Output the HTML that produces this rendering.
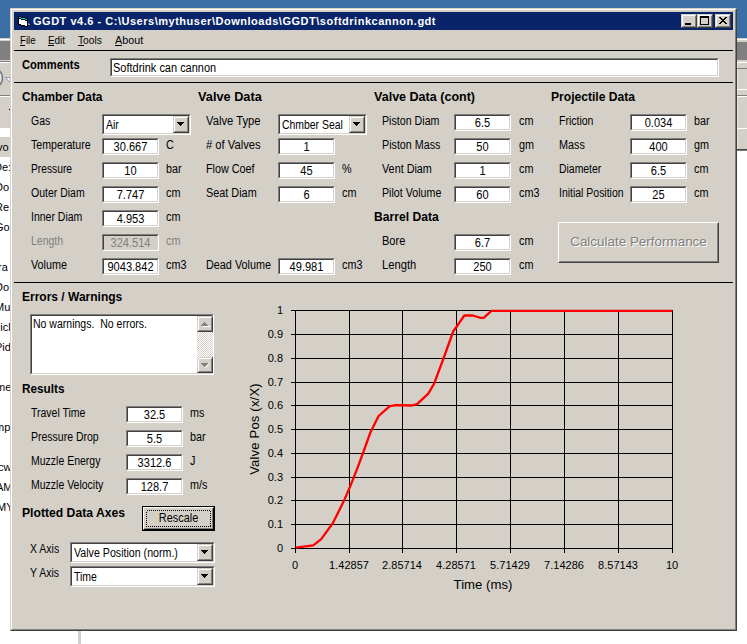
<!DOCTYPE html>
<html><head><meta charset="utf-8"><style>
html,body{margin:0;padding:0;}
body{width:747px;height:644px;position:relative;overflow:hidden;background:#fff;font-family:'Liberation Sans', sans-serif;font-size:11px;line-height:13px;color:#000;}
body div, body svg{position:absolute;box-sizing:content-box;}
body div{white-space:pre;}
</style></head><body>
<div style="left:0px;top:0px;width:747px;height:38px;background:#3a6ea5;"></div>
<div style="left:0px;top:38px;width:10px;height:1px;background:#d4d0c8;"></div>
<div style="left:0px;top:39px;width:10px;height:1px;background:#fff;"></div>
<div style="left:0px;top:40px;width:10px;height:1px;background:#d4d0c8;"></div>
<div style="left:0px;top:41px;width:10px;height:19px;background:#808080;"></div>
<div style="left:0px;top:60px;width:10px;height:1px;background:#d4d0c8;"></div>
<div style="left:0px;top:61px;width:10px;height:1px;background:#808080;"></div>
<div style="left:0px;top:62px;width:10px;height:1px;background:#fff;"></div>
<div style="left:0px;top:63px;width:10px;height:65px;background:#d4d0c8;"></div>
<div style="left:0px;top:95px;width:10px;height:1px;background:#808080;"></div>
<div style="left:0px;top:96px;width:10px;height:1px;background:#fff;"></div>
<div style="left:0px;top:128px;width:10px;height:9px;background:#fff;"></div>
<div style="left:0px;top:137px;width:10px;height:20px;background:#d4d0c8;"></div>
<div style="left:0px;top:157px;width:10px;height:473px;background:#fff;"></div>
<div style="left:78px;top:631px;width:3px;height:13px;background:#d4d0c8;"></div>
<svg style="left:0;top:66px" width="10" height="26"><ellipse cx="-5" cy="12" rx="7.5" ry="9" fill="#e4e4e4" stroke="#687078" stroke-width="1.4"/><ellipse cx="-5" cy="12" rx="9" ry="10.5" fill="none" stroke="#c8c8c8" stroke-width="1"/><path d="M5.5 11.5 L10 11.5 L10 16.5 Z" fill="#fff" stroke="#7080a0" stroke-width="0.7"/></svg>
<div style="left:9px;top:109px;width:1px;height:1px;background:#000;"></div>
<div style="left:-3px;top:141px;font-size:11px;line-height:13px;color:#000;white-space:nowrap;">vo</div>
<div style="left:-6px;top:161px;font-size:11px;line-height:13px;color:#000;white-space:nowrap;">De:</div>
<div style="left:-5px;top:181px;font-size:11px;line-height:13px;color:#000;white-space:nowrap;">Do</div>
<div style="left:-5px;top:201px;font-size:11px;line-height:13px;color:#000;white-space:nowrap;">Re</div>
<div style="left:-5px;top:221px;font-size:11px;line-height:13px;color:#000;white-space:nowrap;">Go</div>
<div style="left:-2px;top:261px;font-size:11px;line-height:13px;color:#000;white-space:nowrap;">ra</div>
<div style="left:-5px;top:281px;font-size:11px;line-height:13px;color:#000;white-space:nowrap;">Do</div>
<div style="left:-5px;top:301px;font-size:11px;line-height:13px;color:#000;white-space:nowrap;">Mu</div>
<div style="left:-7px;top:321px;font-size:11px;line-height:13px;color:#000;white-space:nowrap;">Picl</div>
<div style="left:-5px;top:341px;font-size:11px;line-height:13px;color:#000;white-space:nowrap;">Pid</div>
<div style="left:-4px;top:381px;font-size:11px;line-height:13px;color:#000;white-space:nowrap;">me</div>
<div style="left:-5px;top:421px;font-size:11px;line-height:13px;color:#000;white-space:nowrap;">mp</div>
<div style="left:-2px;top:461px;font-size:11px;line-height:13px;color:#000;white-space:nowrap;">cw</div>
<div style="left:-4px;top:481px;font-size:11px;line-height:13px;color:#000;white-space:nowrap;">AM</div>
<div style="left:-3px;top:501px;font-size:11px;line-height:13px;color:#000;white-space:nowrap;">MY</div>
<div style="left:737px;top:38px;width:10px;height:1px;background:#d4d0c8;"></div>
<div style="left:737px;top:39px;width:10px;height:1px;background:#fff;"></div>
<div style="left:737px;top:40px;width:10px;height:2px;background:#d4d0c8;"></div>
<div style="left:737px;top:42px;width:10px;height:18px;background:#808080;"></div>
<div style="left:737px;top:60px;width:10px;height:2px;background:#d4d0c8;"></div>
<div style="left:737px;top:62px;width:10px;height:1px;background:#fff;"></div>
<div style="left:737px;top:63px;width:10px;height:87px;background:#d4d0c8;"></div>
<div style="left:737px;top:63px;width:1px;height:86px;background:#e8e6e0;"></div>
<div style="left:737px;top:68px;width:10px;height:1px;background:#808080;"></div>
<div style="left:737px;top:89px;width:10px;height:1px;background:#fff;"></div>
<div style="left:737px;top:95px;width:10px;height:1px;background:#808080;"></div>
<div style="left:737px;top:96px;width:10px;height:1px;background:#fff;"></div>
<div style="left:737px;top:128px;width:10px;height:1px;background:#fff;"></div>
<div style="left:737px;top:149px;width:10px;height:1px;background:#404040;"></div>
<div style="left:737px;top:150px;width:10px;height:1px;background:#808080;"></div>
<div style="left:10px;top:8px;width:725px;height:621px;border:1px solid;border-color:#d4d0c8 #404040 #404040 #d4d0c8;background:#d4d0c8"><div style="position:absolute;left:0;top:0;width:723px;height:619px;border:1px solid;border-color:#fff #808080 #808080 #fff;"></div></div>
<div style="left:14px;top:12px;width:719px;height:18px;background:#0a246a;"></div>
<div style="left:33px;top:15px;font-size:11px;line-height:13px;color:#fff;font-weight:bold;letter-spacing:0.52px;">GGDT v4.6 - C:\Users\mythuser\Downloads\GGDT\softdrinkcannon.gdt</div>
<svg style="left:18px;top:16px" width="14" height="12" shape-rendering="crispEdges"><path d="M0 0h3v1h4v1h3v9h-3v-1h-4v-1h-3z" fill="#000"/><rect x="1" y="3" width="2" height="5" fill="#fff"/><rect x="3" y="4" width="4" height="5" fill="#fff"/><rect x="7" y="5" width="2" height="5" fill="#fff"/><rect x="1" y="1" width="2" height="1" fill="#00e0e0"/><rect x="3" y="2" width="4" height="1" fill="#00e0e0"/><rect x="7" y="3" width="2" height="1" fill="#00e0e0"/><path d="M10 7h1v1h1v1h-2z" fill="#a09880"/></svg>
<div style="left:681px;top:14px;width:14px;height:12px;border:1px solid;border-color:#d4d0c8 #404040 #404040 #d4d0c8;"><div style="position:absolute;left:0;top:0;width:12px;height:10px;border:1px solid;border-color:#fff #808080 #808080 #fff;background:#d4d0c8"></div></div>
<div style="left:697px;top:14px;width:14px;height:12px;border:1px solid;border-color:#d4d0c8 #404040 #404040 #d4d0c8;"><div style="position:absolute;left:0;top:0;width:12px;height:10px;border:1px solid;border-color:#fff #808080 #808080 #fff;background:#d4d0c8"></div></div>
<div style="left:715px;top:14px;width:14px;height:12px;border:1px solid;border-color:#d4d0c8 #404040 #404040 #d4d0c8;"><div style="position:absolute;left:0;top:0;width:12px;height:10px;border:1px solid;border-color:#fff #808080 #808080 #fff;background:#d4d0c8"></div></div>
<div style="left:685px;top:23px;width:6px;height:2px;background:#000;"></div>
<svg style="left:700px;top:16px" width="9" height="9" shape-rendering="crispEdges"><rect x="0" y="0" width="9" height="2"/><rect x="0" y="0" width="1" height="9"/><rect x="8" y="0" width="1" height="9"/><rect x="0" y="8" width="9" height="1"/></svg>
<svg style="left:719px;top:17px" width="8" height="7" shape-rendering="crispEdges"><path d="M0 0h2v1h1v1h2v-1h1v-1h2v1h-1v1h-1v1h-1v1h1v1h1v1h1v1h-2v-1h-1v-1h-2v1h-1v1h-2v-1h1v-1h1v-1h1v-1h-1v-1h-1v-1h-1z"/></svg>
<div style="left:20px;top:34px;font-size:11px;line-height:13px;color:#000;transform:scaleX(0.880);transform-origin:0 0;">File</div>
<div style="left:20px;top:45px;width:5px;height:1px;background:#000;"></div>
<div style="left:48px;top:34px;font-size:11px;line-height:13px;color:#000;transform:scaleX(0.900);transform-origin:0 0;">Edit</div>
<div style="left:48px;top:45px;width:6px;height:1px;background:#000;"></div>
<div style="left:78px;top:34px;font-size:11px;line-height:13px;color:#000;transform:scaleX(0.930);transform-origin:0 0;">Tools</div>
<div style="left:78px;top:45px;width:6px;height:1px;background:#000;"></div>
<div style="left:115px;top:34px;font-size:11px;line-height:13px;color:#000;transform:scaleX(0.980);transform-origin:0 0;">About</div>
<div style="left:115px;top:45px;width:7px;height:1px;background:#000;"></div>
<div style="left:14px;top:50px;width:719px;height:1px;background:#000;"></div>
<div style="left:14px;top:82px;width:719px;height:1px;background:#000;"></div>
<div style="left:14px;top:282px;width:719px;height:1px;background:#000;"></div>
<div style="left:22px;top:59px;font-size:12px;line-height:13px;color:#000;font-weight:bold;transform:scaleX(0.929);transform-origin:0 0;">Comments</div>
<div style="left:110px;top:58px;width:607px;height:17px;border:1px solid;border-color:#808080 #fff #fff #808080;"><div style="position:absolute;left:0;top:0;width:605px;height:15px;border:1px solid;border-color:#404040 #d4d0c8 #d4d0c8 #404040;background:#fff"></div></div>
<div style="left:113px;top:62px;font-size:12px;line-height:13px;color:#000;transform:scaleX(0.915);transform-origin:0 0;">Softdrink can cannon</div>
<div style="left:22px;top:91px;font-size:12px;line-height:13px;color:#000;font-weight:bold;transform:scaleX(0.989);transform-origin:0 0;">Chamber Data</div>
<div style="left:198px;top:91px;font-size:12px;line-height:13px;color:#000;font-weight:bold;transform:scaleX(1.062);transform-origin:0 0;">Valve Data</div>
<div style="left:374px;top:91px;font-size:12px;line-height:13px;color:#000;font-weight:bold;transform:scaleX(1.045);transform-origin:0 0;">Valve Data (cont)</div>
<div style="left:551px;top:91px;font-size:12px;line-height:13px;color:#000;font-weight:bold;transform:scaleX(1.008);transform-origin:0 0;">Projectile Data</div>
<div style="left:374px;top:211px;font-size:12px;line-height:13px;color:#000;font-weight:bold;transform:scaleX(1.011);transform-origin:0 0;">Barrel Data</div>
<div style="left:31px;top:115px;font-size:12px;line-height:13px;color:#000;transform:scaleX(0.871);transform-origin:0 0;">Gas</div>
<div style="left:102px;top:114px;width:87px;height:19px;border:1px solid;border-color:#808080 #fff #fff #808080;"><div style="position:absolute;left:0;top:0;width:85px;height:17px;border:1px solid;border-color:#404040 #d4d0c8 #d4d0c8 #404040;background:#fff"></div></div>
<div style="left:173px;top:116px;width:14px;height:15px;border:1px solid;border-color:#d4d0c8 #404040 #404040 #d4d0c8;"><div style="position:absolute;left:0;top:0;width:12px;height:13px;border:1px solid;border-color:#fff #808080 #808080 #fff;background:#d4d0c8"></div></div>
<svg style="left:177px;top:122px" width="7" height="4"><rect x="0" y="0" width="7" height="1"/><rect x="1" y="1" width="5" height="1"/><rect x="2" y="2" width="3" height="1"/><rect x="3" y="3" width="1" height="1"/></svg>
<div style="left:106px;top:119px;font-size:12px;line-height:13px;color:#000;transform:scaleX(0.875);transform-origin:0 0;">Air</div>
<div style="left:31px;top:139px;font-size:12px;line-height:13px;color:#000;transform:scaleX(0.886);transform-origin:0 0;">Temperature</div>
<div style="left:102px;top:138px;width:55px;height:15px;border:1px solid;border-color:#808080 #fff #fff #808080;"><div style="position:absolute;left:0;top:0;width:53px;height:13px;border:1px solid;border-color:#404040 #d4d0c8 #d4d0c8 #404040;background:#fff"></div></div>
<div style="left:102px;top:141px;font-size:12px;line-height:13px;color:#000;width:57px;text-align:center;transform:scaleX(0.920);transform-origin:50% 0;">30.667</div>
<div style="left:166px;top:139px;font-size:12px;line-height:13px;color:#000;transform:scaleX(0.900);transform-origin:0 0;">C</div>
<div style="left:31px;top:163px;font-size:12px;line-height:13px;color:#000;transform:scaleX(0.855);transform-origin:0 0;">Pressure</div>
<div style="left:102px;top:162px;width:55px;height:15px;border:1px solid;border-color:#808080 #fff #fff #808080;"><div style="position:absolute;left:0;top:0;width:53px;height:13px;border:1px solid;border-color:#404040 #d4d0c8 #d4d0c8 #404040;background:#fff"></div></div>
<div style="left:102px;top:165px;font-size:12px;line-height:13px;color:#000;width:57px;text-align:center;transform:scaleX(0.920);transform-origin:50% 0;">10</div>
<div style="left:166px;top:163px;font-size:12px;line-height:13px;color:#000;transform:scaleX(0.900);transform-origin:0 0;">bar</div>
<div style="left:31px;top:187px;font-size:12px;line-height:13px;color:#000;transform:scaleX(0.875);transform-origin:0 0;">Outer Diam</div>
<div style="left:102px;top:186px;width:55px;height:15px;border:1px solid;border-color:#808080 #fff #fff #808080;"><div style="position:absolute;left:0;top:0;width:53px;height:13px;border:1px solid;border-color:#404040 #d4d0c8 #d4d0c8 #404040;background:#fff"></div></div>
<div style="left:102px;top:189px;font-size:12px;line-height:13px;color:#000;width:57px;text-align:center;transform:scaleX(0.920);transform-origin:50% 0;">7.747</div>
<div style="left:166px;top:187px;font-size:12px;line-height:13px;color:#000;transform:scaleX(0.900);transform-origin:0 0;">cm</div>
<div style="left:31px;top:211px;font-size:12px;line-height:13px;color:#000;transform:scaleX(0.875);transform-origin:0 0;">Inner Diam</div>
<div style="left:102px;top:210px;width:55px;height:15px;border:1px solid;border-color:#808080 #fff #fff #808080;"><div style="position:absolute;left:0;top:0;width:53px;height:13px;border:1px solid;border-color:#404040 #d4d0c8 #d4d0c8 #404040;background:#fff"></div></div>
<div style="left:102px;top:213px;font-size:12px;line-height:13px;color:#000;width:57px;text-align:center;transform:scaleX(0.920);transform-origin:50% 0;">4.953</div>
<div style="left:166px;top:211px;font-size:12px;line-height:13px;color:#000;transform:scaleX(0.900);transform-origin:0 0;">cm</div>
<div style="left:31px;top:235px;font-size:12px;line-height:13px;color:#808080;transform:scaleX(0.875);transform-origin:0 0;">Length</div>
<div style="left:102px;top:234px;width:55px;height:15px;border:1px solid;border-color:#808080 #fff #fff #808080;"><div style="position:absolute;left:0;top:0;width:53px;height:13px;border:1px solid;border-color:#404040 #d4d0c8 #d4d0c8 #404040;background:#d4d0c8"></div></div>
<div style="left:102px;top:237px;font-size:12px;line-height:13px;color:#808080;width:57px;text-align:center;transform:scaleX(0.920);transform-origin:50% 0;">324.514</div>
<div style="left:166px;top:235px;font-size:12px;line-height:13px;color:#808080;transform:scaleX(0.900);transform-origin:0 0;">cm</div>
<div style="left:31px;top:259px;font-size:12px;line-height:13px;color:#000;transform:scaleX(0.897);transform-origin:0 0;">Volume</div>
<div style="left:102px;top:258px;width:55px;height:15px;border:1px solid;border-color:#808080 #fff #fff #808080;"><div style="position:absolute;left:0;top:0;width:53px;height:13px;border:1px solid;border-color:#404040 #d4d0c8 #d4d0c8 #404040;background:#fff"></div></div>
<div style="left:102px;top:261px;font-size:12px;line-height:13px;color:#000;width:57px;text-align:center;transform:scaleX(0.920);transform-origin:50% 0;">9043.842</div>
<div style="left:166px;top:259px;font-size:12px;line-height:13px;color:#000;transform:scaleX(0.900);transform-origin:0 0;">cm3</div>
<div style="left:206px;top:115px;font-size:12px;line-height:13px;color:#000;transform:scaleX(0.936);transform-origin:0 0;">Valve Type</div>
<div style="left:278px;top:114px;width:87px;height:19px;border:1px solid;border-color:#808080 #fff #fff #808080;"><div style="position:absolute;left:0;top:0;width:85px;height:17px;border:1px solid;border-color:#404040 #d4d0c8 #d4d0c8 #404040;background:#fff"></div></div>
<div style="left:349px;top:116px;width:14px;height:15px;border:1px solid;border-color:#d4d0c8 #404040 #404040 #d4d0c8;"><div style="position:absolute;left:0;top:0;width:12px;height:13px;border:1px solid;border-color:#fff #808080 #808080 #fff;background:#d4d0c8"></div></div>
<svg style="left:353px;top:122px" width="7" height="4"><rect x="0" y="0" width="7" height="1"/><rect x="1" y="1" width="5" height="1"/><rect x="2" y="2" width="3" height="1"/><rect x="3" y="3" width="1" height="1"/></svg>
<div style="left:282px;top:119px;font-size:12px;line-height:13px;color:#000;transform:scaleX(0.869);transform-origin:0 0;">Chmber Seal</div>
<div style="left:206px;top:139px;font-size:12px;line-height:13px;color:#000;transform:scaleX(0.934);transform-origin:0 0;"># of Valves</div>
<div style="left:278px;top:138px;width:55px;height:15px;border:1px solid;border-color:#808080 #fff #fff #808080;"><div style="position:absolute;left:0;top:0;width:53px;height:13px;border:1px solid;border-color:#404040 #d4d0c8 #d4d0c8 #404040;background:#fff"></div></div>
<div style="left:278px;top:141px;font-size:12px;line-height:13px;color:#000;width:57px;text-align:center;transform:scaleX(0.920);transform-origin:50% 0;">1</div>
<div style="left:206px;top:163px;font-size:12px;line-height:13px;color:#000;transform:scaleX(0.899);transform-origin:0 0;">Flow Coef</div>
<div style="left:278px;top:162px;width:55px;height:15px;border:1px solid;border-color:#808080 #fff #fff #808080;"><div style="position:absolute;left:0;top:0;width:53px;height:13px;border:1px solid;border-color:#404040 #d4d0c8 #d4d0c8 #404040;background:#fff"></div></div>
<div style="left:278px;top:165px;font-size:12px;line-height:13px;color:#000;width:57px;text-align:center;transform:scaleX(0.920);transform-origin:50% 0;">45</div>
<div style="left:342px;top:163px;font-size:12px;line-height:13px;color:#000;transform:scaleX(0.900);transform-origin:0 0;">%</div>
<div style="left:206px;top:187px;font-size:12px;line-height:13px;color:#000;transform:scaleX(0.905);transform-origin:0 0;">Seat Diam</div>
<div style="left:278px;top:186px;width:55px;height:15px;border:1px solid;border-color:#808080 #fff #fff #808080;"><div style="position:absolute;left:0;top:0;width:53px;height:13px;border:1px solid;border-color:#404040 #d4d0c8 #d4d0c8 #404040;background:#fff"></div></div>
<div style="left:278px;top:189px;font-size:12px;line-height:13px;color:#000;width:57px;text-align:center;transform:scaleX(0.920);transform-origin:50% 0;">6</div>
<div style="left:342px;top:187px;font-size:12px;line-height:13px;color:#000;transform:scaleX(0.900);transform-origin:0 0;">cm</div>
<div style="left:206px;top:259px;font-size:12px;line-height:13px;color:#000;transform:scaleX(0.902);transform-origin:0 0;">Dead Volume</div>
<div style="left:278px;top:258px;width:55px;height:15px;border:1px solid;border-color:#808080 #fff #fff #808080;"><div style="position:absolute;left:0;top:0;width:53px;height:13px;border:1px solid;border-color:#404040 #d4d0c8 #d4d0c8 #404040;background:#fff"></div></div>
<div style="left:278px;top:261px;font-size:12px;line-height:13px;color:#000;width:57px;text-align:center;transform:scaleX(0.920);transform-origin:50% 0;">49.981</div>
<div style="left:342px;top:259px;font-size:12px;line-height:13px;color:#000;transform:scaleX(0.900);transform-origin:0 0;">cm3</div>
<div style="left:382px;top:115px;font-size:12px;line-height:13px;color:#000;transform:scaleX(0.889);transform-origin:0 0;">Piston Diam</div>
<div style="left:454px;top:114px;width:55px;height:15px;border:1px solid;border-color:#808080 #fff #fff #808080;"><div style="position:absolute;left:0;top:0;width:53px;height:13px;border:1px solid;border-color:#404040 #d4d0c8 #d4d0c8 #404040;background:#fff"></div></div>
<div style="left:454px;top:117px;font-size:12px;line-height:13px;color:#000;width:57px;text-align:center;transform:scaleX(0.920);transform-origin:50% 0;">6.5</div>
<div style="left:519px;top:115px;font-size:12px;line-height:13px;color:#000;transform:scaleX(0.900);transform-origin:0 0;">cm</div>
<div style="left:382px;top:139px;font-size:12px;line-height:13px;color:#000;transform:scaleX(0.893);transform-origin:0 0;">Piston Mass</div>
<div style="left:454px;top:138px;width:55px;height:15px;border:1px solid;border-color:#808080 #fff #fff #808080;"><div style="position:absolute;left:0;top:0;width:53px;height:13px;border:1px solid;border-color:#404040 #d4d0c8 #d4d0c8 #404040;background:#fff"></div></div>
<div style="left:454px;top:141px;font-size:12px;line-height:13px;color:#000;width:57px;text-align:center;transform:scaleX(0.920);transform-origin:50% 0;">50</div>
<div style="left:519px;top:139px;font-size:12px;line-height:13px;color:#000;transform:scaleX(0.900);transform-origin:0 0;">gm</div>
<div style="left:382px;top:163px;font-size:12px;line-height:13px;color:#000;transform:scaleX(0.901);transform-origin:0 0;">Vent Diam</div>
<div style="left:454px;top:162px;width:55px;height:15px;border:1px solid;border-color:#808080 #fff #fff #808080;"><div style="position:absolute;left:0;top:0;width:53px;height:13px;border:1px solid;border-color:#404040 #d4d0c8 #d4d0c8 #404040;background:#fff"></div></div>
<div style="left:454px;top:165px;font-size:12px;line-height:13px;color:#000;width:57px;text-align:center;transform:scaleX(0.920);transform-origin:50% 0;">1</div>
<div style="left:519px;top:163px;font-size:12px;line-height:13px;color:#000;transform:scaleX(0.900);transform-origin:0 0;">cm</div>
<div style="left:382px;top:187px;font-size:12px;line-height:13px;color:#000;transform:scaleX(0.890);transform-origin:0 0;">Pilot Volume</div>
<div style="left:454px;top:186px;width:55px;height:15px;border:1px solid;border-color:#808080 #fff #fff #808080;"><div style="position:absolute;left:0;top:0;width:53px;height:13px;border:1px solid;border-color:#404040 #d4d0c8 #d4d0c8 #404040;background:#fff"></div></div>
<div style="left:454px;top:189px;font-size:12px;line-height:13px;color:#000;width:57px;text-align:center;transform:scaleX(0.920);transform-origin:50% 0;">60</div>
<div style="left:519px;top:187px;font-size:12px;line-height:13px;color:#000;transform:scaleX(0.900);transform-origin:0 0;">cm3</div>
<div style="left:382px;top:235px;font-size:12px;line-height:13px;color:#000;transform:scaleX(0.920);transform-origin:0 0;">Bore</div>
<div style="left:454px;top:234px;width:55px;height:15px;border:1px solid;border-color:#808080 #fff #fff #808080;"><div style="position:absolute;left:0;top:0;width:53px;height:13px;border:1px solid;border-color:#404040 #d4d0c8 #d4d0c8 #404040;background:#fff"></div></div>
<div style="left:454px;top:237px;font-size:12px;line-height:13px;color:#000;width:57px;text-align:center;transform:scaleX(0.920);transform-origin:50% 0;">6.7</div>
<div style="left:519px;top:235px;font-size:12px;line-height:13px;color:#000;transform:scaleX(0.900);transform-origin:0 0;">cm</div>
<div style="left:382px;top:259px;font-size:12px;line-height:13px;color:#000;transform:scaleX(0.933);transform-origin:0 0;">Length</div>
<div style="left:454px;top:258px;width:55px;height:15px;border:1px solid;border-color:#808080 #fff #fff #808080;"><div style="position:absolute;left:0;top:0;width:53px;height:13px;border:1px solid;border-color:#404040 #d4d0c8 #d4d0c8 #404040;background:#fff"></div></div>
<div style="left:454px;top:261px;font-size:12px;line-height:13px;color:#000;width:57px;text-align:center;transform:scaleX(0.920);transform-origin:50% 0;">250</div>
<div style="left:519px;top:259px;font-size:12px;line-height:13px;color:#000;transform:scaleX(0.900);transform-origin:0 0;">cm</div>
<div style="left:559px;top:115px;font-size:12px;line-height:13px;color:#000;transform:scaleX(0.876);transform-origin:0 0;">Friction</div>
<div style="left:630px;top:114px;width:55px;height:15px;border:1px solid;border-color:#808080 #fff #fff #808080;"><div style="position:absolute;left:0;top:0;width:53px;height:13px;border:1px solid;border-color:#404040 #d4d0c8 #d4d0c8 #404040;background:#fff"></div></div>
<div style="left:630px;top:117px;font-size:12px;line-height:13px;color:#000;width:57px;text-align:center;transform:scaleX(0.920);transform-origin:50% 0;">0.034</div>
<div style="left:694px;top:115px;font-size:12px;line-height:13px;color:#000;transform:scaleX(0.900);transform-origin:0 0;">bar</div>
<div style="left:559px;top:139px;font-size:12px;line-height:13px;color:#000;transform:scaleX(0.903);transform-origin:0 0;">Mass</div>
<div style="left:630px;top:138px;width:55px;height:15px;border:1px solid;border-color:#808080 #fff #fff #808080;"><div style="position:absolute;left:0;top:0;width:53px;height:13px;border:1px solid;border-color:#404040 #d4d0c8 #d4d0c8 #404040;background:#fff"></div></div>
<div style="left:630px;top:141px;font-size:12px;line-height:13px;color:#000;width:57px;text-align:center;transform:scaleX(0.920);transform-origin:50% 0;">400</div>
<div style="left:694px;top:139px;font-size:12px;line-height:13px;color:#000;transform:scaleX(0.900);transform-origin:0 0;">gm</div>
<div style="left:559px;top:163px;font-size:12px;line-height:13px;color:#000;transform:scaleX(0.868);transform-origin:0 0;">Diameter</div>
<div style="left:630px;top:162px;width:55px;height:15px;border:1px solid;border-color:#808080 #fff #fff #808080;"><div style="position:absolute;left:0;top:0;width:53px;height:13px;border:1px solid;border-color:#404040 #d4d0c8 #d4d0c8 #404040;background:#fff"></div></div>
<div style="left:630px;top:165px;font-size:12px;line-height:13px;color:#000;width:57px;text-align:center;transform:scaleX(0.920);transform-origin:50% 0;">6.5</div>
<div style="left:694px;top:163px;font-size:12px;line-height:13px;color:#000;transform:scaleX(0.900);transform-origin:0 0;">cm</div>
<div style="left:559px;top:187px;font-size:12px;line-height:13px;color:#000;transform:scaleX(0.872);transform-origin:0 0;">Initial Position</div>
<div style="left:630px;top:186px;width:55px;height:15px;border:1px solid;border-color:#808080 #fff #fff #808080;"><div style="position:absolute;left:0;top:0;width:53px;height:13px;border:1px solid;border-color:#404040 #d4d0c8 #d4d0c8 #404040;background:#fff"></div></div>
<div style="left:630px;top:189px;font-size:12px;line-height:13px;color:#000;width:57px;text-align:center;transform:scaleX(0.920);transform-origin:50% 0;">25</div>
<div style="left:694px;top:187px;font-size:12px;line-height:13px;color:#000;transform:scaleX(0.900);transform-origin:0 0;">cm</div>
<div style="left:558px;top:222px;width:159px;height:39px;border:1px solid;border-color:#fff #404040 #404040 #fff;"><div style="position:absolute;left:0;top:0;width:157px;height:37px;border:1px solid;border-color:#d4d0c8 #808080 #808080 #d4d0c8;background:#d4d0c8"></div></div>
<div style="left:559px;top:235px;font-size:13px;line-height:15px;color:#fff;width:161px;text-align:center;transform:scaleX(1.033);transform-origin:50% 0;">Calculate Performance</div>
<div style="left:558px;top:234px;font-size:13px;line-height:15px;color:#808080;width:161px;text-align:center;transform:scaleX(1.033);transform-origin:50% 0;">Calculate Performance</div>
<div style="left:22px;top:291px;font-size:12px;line-height:13px;color:#000;font-weight:bold;">Errors / Warnings</div>
<div style="left:30px;top:314px;width:182px;height:59px;border:1px solid;border-color:#808080 #fff #fff #808080;"><div style="position:absolute;left:0;top:0;width:180px;height:57px;border:1px solid;border-color:#404040 #d4d0c8 #d4d0c8 #404040;background:#fff"></div></div>
<div style="left:33px;top:318px;font-size:12px;line-height:13px;color:#000;transform:scaleX(0.876);transform-origin:0 0;">No warnings.  No errors.</div>
<div style="left:197px;top:316px;width:16px;height:57px;background-color:#fff;background-image:linear-gradient(45deg,#d4d0c8 25%,transparent 25%,transparent 75%,#d4d0c8 75%),linear-gradient(45deg,#d4d0c8 25%,transparent 25%,transparent 75%,#d4d0c8 75%);background-size:2px 2px;background-position:0 0,1px 1px;"></div>
<div style="left:197px;top:316px;width:14px;height:14px;border:1px solid;border-color:#d4d0c8 #404040 #404040 #d4d0c8;"><div style="position:absolute;left:0;top:0;width:12px;height:12px;border:1px solid;border-color:#fff #808080 #808080 #fff;background:#d4d0c8"></div></div>
<div style="left:197px;top:357px;width:14px;height:14px;border:1px solid;border-color:#d4d0c8 #404040 #404040 #d4d0c8;"><div style="position:absolute;left:0;top:0;width:12px;height:12px;border:1px solid;border-color:#fff #808080 #808080 #fff;background:#d4d0c8"></div></div>
<svg style="left:201px;top:322px" width="9" height="5" shape-rendering="crispEdges"><path d="M3 0h1v1h1v1h1v1h1v1h-7v-1h1v-1h1v-1h1z" fill="#808080"/><rect x="1" y="4" width="8" height="1" fill="#fff"/></svg>
<svg style="left:201px;top:363px" width="9" height="5" shape-rendering="crispEdges"><path d="M0 0h7v1h-1v1h-1v1h-1v1h-1v-1h-1v-1h-1v-1h-1z" fill="#808080"/><rect x="7" y="1" width="1" height="1" fill="#fff"/><rect x="6" y="2" width="1" height="1" fill="#fff"/><rect x="5" y="3" width="1" height="1" fill="#fff"/><rect x="4" y="4" width="1" height="1" fill="#fff"/></svg>
<div style="left:22px;top:383px;font-size:12px;line-height:13px;color:#000;font-weight:bold;transform:scaleX(0.980);transform-origin:0 0;">Results</div>
<div style="left:31px;top:407px;font-size:12px;line-height:13px;color:#000;transform:scaleX(0.875);transform-origin:0 0;">Travel Time</div>
<div style="left:126px;top:406px;width:55px;height:15px;border:1px solid;border-color:#808080 #fff #fff #808080;"><div style="position:absolute;left:0;top:0;width:53px;height:13px;border:1px solid;border-color:#404040 #d4d0c8 #d4d0c8 #404040;background:#fff"></div></div>
<div style="left:126px;top:409px;font-size:12px;line-height:13px;color:#000;width:57px;text-align:center;transform:scaleX(0.920);transform-origin:50% 0;">32.5</div>
<div style="left:190px;top:407px;font-size:12px;line-height:13px;color:#000;transform:scaleX(0.900);transform-origin:0 0;">ms</div>
<div style="left:31px;top:431px;font-size:12px;line-height:13px;color:#000;transform:scaleX(0.875);transform-origin:0 0;">Pressure Drop</div>
<div style="left:126px;top:430px;width:55px;height:15px;border:1px solid;border-color:#808080 #fff #fff #808080;"><div style="position:absolute;left:0;top:0;width:53px;height:13px;border:1px solid;border-color:#404040 #d4d0c8 #d4d0c8 #404040;background:#fff"></div></div>
<div style="left:126px;top:433px;font-size:12px;line-height:13px;color:#000;width:57px;text-align:center;transform:scaleX(0.920);transform-origin:50% 0;">5.5</div>
<div style="left:190px;top:431px;font-size:12px;line-height:13px;color:#000;transform:scaleX(0.900);transform-origin:0 0;">bar</div>
<div style="left:31px;top:455px;font-size:12px;line-height:13px;color:#000;transform:scaleX(0.875);transform-origin:0 0;">Muzzle Energy</div>
<div style="left:126px;top:454px;width:55px;height:15px;border:1px solid;border-color:#808080 #fff #fff #808080;"><div style="position:absolute;left:0;top:0;width:53px;height:13px;border:1px solid;border-color:#404040 #d4d0c8 #d4d0c8 #404040;background:#fff"></div></div>
<div style="left:126px;top:457px;font-size:12px;line-height:13px;color:#000;width:57px;text-align:center;transform:scaleX(0.920);transform-origin:50% 0;">3312.6</div>
<div style="left:190px;top:455px;font-size:12px;line-height:13px;color:#000;transform:scaleX(0.900);transform-origin:0 0;">J</div>
<div style="left:31px;top:479px;font-size:12px;line-height:13px;color:#000;transform:scaleX(0.875);transform-origin:0 0;">Muzzle Velocity</div>
<div style="left:126px;top:478px;width:55px;height:15px;border:1px solid;border-color:#808080 #fff #fff #808080;"><div style="position:absolute;left:0;top:0;width:53px;height:13px;border:1px solid;border-color:#404040 #d4d0c8 #d4d0c8 #404040;background:#fff"></div></div>
<div style="left:126px;top:481px;font-size:12px;line-height:13px;color:#000;width:57px;text-align:center;transform:scaleX(0.920);transform-origin:50% 0;">128.7</div>
<div style="left:190px;top:479px;font-size:12px;line-height:13px;color:#000;transform:scaleX(0.900);transform-origin:0 0;">m/s</div>
<div style="left:22px;top:507px;font-size:12px;line-height:13px;color:#000;font-weight:bold;transform:scaleX(1.014);transform-origin:0 0;">Plotted Data Axes</div>
<div style="left:142px;top:506px;width:71px;height:23px;border:1px solid #000;"></div>
<div style="left:143px;top:507px;width:69px;height:21px;border:1px solid;border-color:#fff #000 #000 #fff;"><div style="position:absolute;left:0;top:0;width:67px;height:19px;border:1px solid;border-color:#d4d0c8 #808080 #808080 #d4d0c8;background:#d4d0c8"></div></div>
<svg style="left:146px;top:510px" width="65" height="17" shape-rendering="crispEdges"><rect x="0.5" y="0.5" width="64" height="16" fill="none" stroke="#000" stroke-width="1" stroke-dasharray="1 1"/></svg>
<div style="left:142px;top:512px;font-size:12px;line-height:13px;color:#000;width:73px;text-align:center;transform:scaleX(0.911);transform-origin:50% 0;">Rescale</div>
<div style="left:30px;top:543px;font-size:12px;line-height:13px;color:#000;transform:scaleX(0.875);transform-origin:0 0;">X Axis</div>
<div style="left:70px;top:542px;width:143px;height:19px;border:1px solid;border-color:#808080 #fff #fff #808080;"><div style="position:absolute;left:0;top:0;width:141px;height:17px;border:1px solid;border-color:#404040 #d4d0c8 #d4d0c8 #404040;background:#fff"></div></div>
<div style="left:197px;top:544px;width:14px;height:15px;border:1px solid;border-color:#d4d0c8 #404040 #404040 #d4d0c8;"><div style="position:absolute;left:0;top:0;width:12px;height:13px;border:1px solid;border-color:#fff #808080 #808080 #fff;background:#d4d0c8"></div></div>
<svg style="left:201px;top:550px" width="7" height="4"><rect x="0" y="0" width="7" height="1"/><rect x="1" y="1" width="5" height="1"/><rect x="2" y="2" width="3" height="1"/><rect x="3" y="3" width="1" height="1"/></svg>
<div style="left:74px;top:547px;font-size:12px;line-height:13px;color:#000;transform:scaleX(0.887);transform-origin:0 0;">Valve Position (norm.)</div>
<div style="left:30px;top:567px;font-size:12px;line-height:13px;color:#000;transform:scaleX(0.875);transform-origin:0 0;">Y Axis</div>
<div style="left:70px;top:566px;width:143px;height:19px;border:1px solid;border-color:#808080 #fff #fff #808080;"><div style="position:absolute;left:0;top:0;width:141px;height:17px;border:1px solid;border-color:#404040 #d4d0c8 #d4d0c8 #404040;background:#fff"></div></div>
<div style="left:197px;top:568px;width:14px;height:15px;border:1px solid;border-color:#d4d0c8 #404040 #404040 #d4d0c8;"><div style="position:absolute;left:0;top:0;width:12px;height:13px;border:1px solid;border-color:#fff #808080 #808080 #fff;background:#d4d0c8"></div></div>
<svg style="left:201px;top:574px" width="7" height="4"><rect x="0" y="0" width="7" height="1"/><rect x="1" y="1" width="5" height="1"/><rect x="2" y="2" width="3" height="1"/><rect x="3" y="3" width="1" height="1"/></svg>
<div style="left:74px;top:571px;font-size:12px;line-height:13px;color:#000;transform:scaleX(0.875);transform-origin:0 0;">Time</div>
<svg style="left:0;top:0" width="747" height="644" shape-rendering="crispEdges"><rect x="291" y="310" width="382" height="1" fill="#000"/><rect x="291" y="334" width="382" height="1" fill="#000"/><rect x="291" y="358" width="382" height="1" fill="#000"/><rect x="291" y="382" width="382" height="1" fill="#000"/><rect x="291" y="405" width="382" height="1" fill="#000"/><rect x="291" y="429" width="382" height="1" fill="#000"/><rect x="291" y="453" width="382" height="1" fill="#000"/><rect x="291" y="477" width="382" height="1" fill="#000"/><rect x="291" y="500" width="382" height="1" fill="#000"/><rect x="291" y="524" width="382" height="1" fill="#000"/><rect x="291" y="548" width="382" height="1" fill="#000"/><rect x="295" y="310" width="1" height="243" fill="#000"/><rect x="349" y="310" width="1" height="243" fill="#000"/><rect x="402" y="310" width="1" height="243" fill="#000"/><rect x="456" y="310" width="1" height="243" fill="#000"/><rect x="510" y="310" width="1" height="243" fill="#000"/><rect x="564" y="310" width="1" height="243" fill="#000"/><rect x="618" y="310" width="1" height="243" fill="#000"/><rect x="672" y="310" width="1" height="243" fill="#000"/></svg>
<svg style="left:0;top:0" width="747" height="644"><path d="M295.7 547.7 L313.2 545.4 L321.2 539.1 L332.9 523.0 L343.6 501.6 L349.8 487.3 L357.9 466.8 L363.2 452.5 L370.5 432.2 L378.6 416.0 L389.8 406.1 L396.0 405.2 L412.1 405.5 L417.1 404.2 L428.3 393.7 L434.0 383.9 L443.3 359.0 L453.4 331.0 L455.7 328.0 L464.3 315.5 L472.8 315.5 L480.6 317.9 L483.7 317.9 L491.4 310.9 L500.0 310.9 L672.0 310.9" fill="none" stroke="#ff0000" stroke-width="2.3" stroke-linejoin="round"/></svg>
<div style="left:200px;top:304px;font-size:11px;line-height:13px;color:#000;width:83px;text-align:right;">1</div>
<div style="left:200px;top:328px;font-size:11px;line-height:13px;color:#000;width:83px;text-align:right;">0.9</div>
<div style="left:200px;top:352px;font-size:11px;line-height:13px;color:#000;width:83px;text-align:right;">0.8</div>
<div style="left:200px;top:376px;font-size:11px;line-height:13px;color:#000;width:83px;text-align:right;">0.7</div>
<div style="left:200px;top:399px;font-size:11px;line-height:13px;color:#000;width:83px;text-align:right;">0.6</div>
<div style="left:200px;top:423px;font-size:11px;line-height:13px;color:#000;width:83px;text-align:right;">0.5</div>
<div style="left:200px;top:447px;font-size:11px;line-height:13px;color:#000;width:83px;text-align:right;">0.4</div>
<div style="left:200px;top:471px;font-size:11px;line-height:13px;color:#000;width:83px;text-align:right;">0.3</div>
<div style="left:200px;top:494px;font-size:11px;line-height:13px;color:#000;width:83px;text-align:right;">0.2</div>
<div style="left:200px;top:518px;font-size:11px;line-height:13px;color:#000;width:83px;text-align:right;">0.1</div>
<div style="left:200px;top:542px;font-size:11px;line-height:13px;color:#000;width:83px;text-align:right;">0</div>
<div style="left:245px;top:559px;font-size:11px;line-height:13px;color:#000;width:100px;text-align:center;">0</div>
<div style="left:299px;top:559px;font-size:11px;line-height:13px;color:#000;width:100px;text-align:center;">1.42857</div>
<div style="left:352px;top:559px;font-size:11px;line-height:13px;color:#000;width:100px;text-align:center;">2.85714</div>
<div style="left:406px;top:559px;font-size:11px;line-height:13px;color:#000;width:100px;text-align:center;">4.28571</div>
<div style="left:460px;top:559px;font-size:11px;line-height:13px;color:#000;width:100px;text-align:center;">5.71429</div>
<div style="left:514px;top:559px;font-size:11px;line-height:13px;color:#000;width:100px;text-align:center;">7.14286</div>
<div style="left:568px;top:559px;font-size:11px;line-height:13px;color:#000;width:100px;text-align:center;">8.57143</div>
<div style="left:622px;top:559px;font-size:11px;line-height:13px;color:#000;width:100px;text-align:center;">10</div>
<div style="left:433px;top:577px;font-size:13px;line-height:15px;color:#000;width:100px;text-align:center;transform:scaleX(1.014);transform-origin:50% 0;">Time (ms)</div>
<div style="left:195px;top:421px;width:120px;text-align:center;font-size:13px;line-height:15px;letter-spacing:0.2px;transform:rotate(-90deg);transform-origin:60px 8px;">Valve Pos (x/X)</div>
</body></html>
